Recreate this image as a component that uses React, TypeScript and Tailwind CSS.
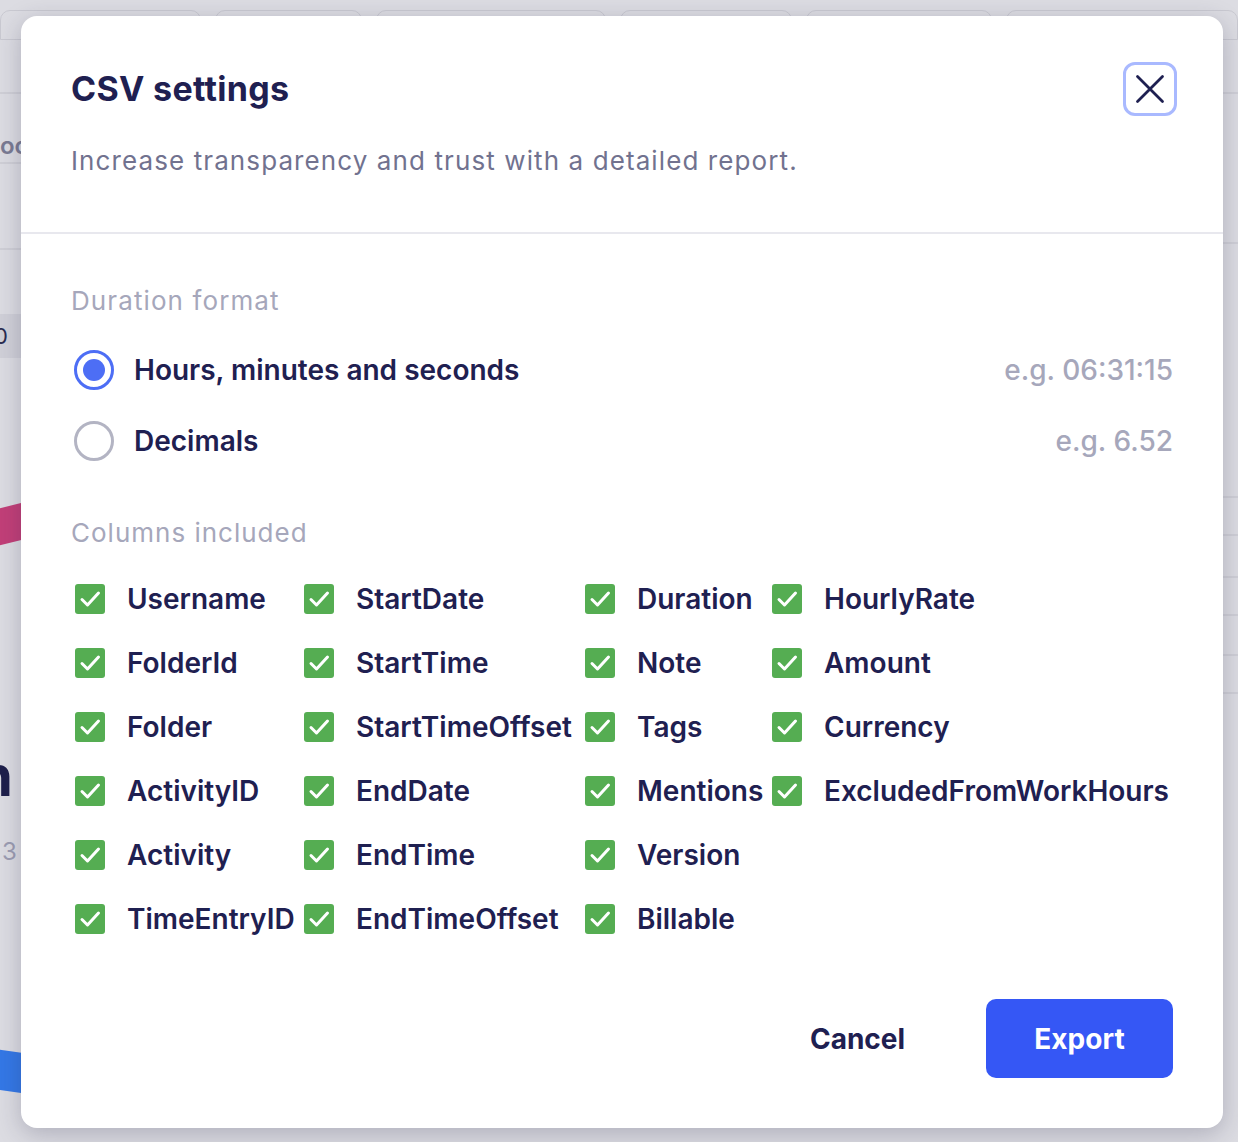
const columns = [
  "Username",
  "FolderId",
  "Folder",
  "ActivityID",
  "Activity",
  "TimeEntryID",
  "StartDate",
  "StartTime",
  "StartTimeOffset",
  "EndDate",
  "EndTime",
  "EndTimeOffset",
  "Duration",
  "Note",
  "Tags",
  "Mentions",
  "Version",
  "Billable",
  "HourlyRate",
  "Amount",
  "Currency",
  "ExcludedFromWorkHours",
];

const formats = [
  { label: "Hours, minutes and seconds", example: "e.g. 06:31:15", selected: true },
  { label: "Decimals", example: "e.g. 6.52", selected: false },
];

function Checkbox() {
  return (
    <span className="ml-[4px] flex h-[30px] w-[30px] shrink-0 items-center justify-center rounded-[3px] bg-[#55ad52]">
      <svg viewBox="0 0 30 30" className="h-[30px] w-[30px]" fill="none" stroke="white" strokeWidth="3" strokeLinecap="round" strokeLinejoin="round">
        <path d="M7 15.5l5.5 5.5L23.5 9" />
      </svg>
    </span>
  );
}

function Radio({ selected }: { selected: boolean }) {
  return (
    <span
      className={
        selected
          ? "flex h-[40px] w-[40px] shrink-0 items-center justify-center rounded-full border-[3px] border-[#4d6ef5]"
          : "flex h-[40px] w-[40px] shrink-0 items-center justify-center rounded-full border-[3px] border-[#b3b4c3]"
      }
    >
      {selected && <span className="h-[22px] w-[22px] rounded-full bg-[#4d6ef5]" />}
    </span>
  );
}

export default function App() {
  return (
    <div className="relative h-[1142px] w-[1238px] overflow-hidden bg-[#dcdce2] font-['Inter','Noto_Sans',sans-serif]">
      {/* Page behind the overlay */}
      <div className="absolute left-0 right-0 top-[10px] flex gap-[14px]">
        <div className="h-[30px] w-[208px] rounded-t-[10px] border border-[#c9c9d1]" />
        <div className="h-[30px] w-[152px] rounded-t-[10px] border border-[#c9c9d1]" />
        <div className="h-[30px] w-[238px] rounded-t-[10px] border border-[#c9c9d1]" />
        <div className="h-[30px] w-[178px] rounded-t-[10px] border border-[#c9c9d1]" />
        <div className="h-[30px] w-[192px] rounded-t-[10px] border border-[#c9c9d1]" />
        <div className="h-[30px] w-[240px] rounded-t-[10px] border border-[#c9c9d1]" />
      </div>
      <div className="absolute left-0 top-[92px] h-[2px] w-[30px] bg-[#cfcfd6]" />
      <div className="absolute left-0 top-[128px] text-[24px] font-semibold text-[#7a7b93]">oo</div>
      <div className="absolute left-0 top-[162px] h-[2px] w-[30px] bg-[#cfcfd6]" />
      <div className="absolute left-0 top-[248px] h-[2px] w-[30px] bg-[#cfcfd6]" />
      <div className="absolute left-0 top-[314px] flex h-[44px] w-[30px] items-center rounded-r-[6px] bg-[#d0d0d8] text-[22px] text-[#2a2b50]">
        <span className="-ml-[6px]">0</span>
      </div>
      <div className="absolute -left-[10px] top-[505px] h-[36px] w-[50px] -rotate-[14deg] bg-[#c23f78]" />
      <div className="absolute left-0 top-[748px] text-[56px] font-bold leading-none text-[#1e1f4b]">
        <span className="-ml-[22px]">h</span>
      </div>
      <div className="absolute left-[2px] top-[834px] text-[24px] text-[#9c9db2]">3</div>
      <div className="absolute -left-[10px] top-[1052px] h-[40px] w-[50px] rotate-[8deg] bg-[#3478e6]" />
      <div className="absolute right-0 top-[92px] h-[2px] w-[20px] bg-[#cfcfd6]" />
      <div className="absolute right-0 top-[242px] h-[2px] w-[20px] bg-[#cfcfd6]" />
      <div className="absolute right-0 top-[496px] h-[2px] w-[20px] bg-[#cfcfd6]" />
      <div className="absolute right-0 top-[534px] h-[2px] w-[20px] bg-[#cfcfd6]" />
      <div className="absolute right-0 top-[576px] h-[2px] w-[20px] bg-[#cfcfd6]" />
      <div className="absolute right-0 top-[614px] h-[2px] w-[20px] bg-[#cfcfd6]" />
      <div className="absolute right-0 top-[654px] h-[2px] w-[20px] bg-[#cfcfd6]" />
      <div className="absolute right-0 top-[692px] h-[2px] w-[20px] bg-[#cfcfd6]" />

      {/* Modal */}
      <div className="relative ml-[21px] mt-[16px] flex h-[1112px] w-[1202px] flex-col rounded-[16px] bg-white shadow-[0_6px_24px_rgba(40,40,70,0.25)]">
        <div className="border-b-2 border-[#e8e8ee] px-[50px] pb-[53px] pt-[46px]">
          <div className="flex h-[54px] items-center justify-between">
            <h1 className="text-[34px] font-bold leading-none tracking-[0.3px] text-[#1f2051]">CSV settings</h1>
            <button className="-mr-[4px] flex h-[54px] w-[54px] items-center justify-center rounded-[12px] border-[3px] border-[#a9b9ff]">
              <svg viewBox="0 0 30 30" className="h-[30px] w-[30px]" fill="none" stroke="#1f2051" strokeWidth="2.8" strokeLinecap="round">
                <path d="M2.5 2.5l25 25M27.5 2.5l-25 25" />
              </svg>
            </button>
          </div>
          <p className="mt-[27px] text-[26px] leading-[36px] tracking-[1.1px] text-[#71728f]">
            Increase transparency and trust with a detailed report.
          </p>
        </div>

        <div className="flex flex-1 flex-col px-[50px] pb-[50px] pt-[49px]">
          <div className="text-[26px] leading-[36px] tracking-[1.1px] text-[#a6a7bb]">Duration format</div>
          <div className="mt-[27px] flex flex-col gap-[23px] pl-[3px]">
            {formats.map((f) => (
              <div key={f.label} className="flex h-[48px] items-center">
                <Radio selected={f.selected} />
                <span className="ml-[20px] text-[28px] font-semibold text-[#1f2051]">{f.label}</span>
                <span className="ml-auto text-[28px] font-medium text-[#a6a7bb]">{f.example}</span>
              </div>
            ))}
          </div>

          <div className="mt-[50px] text-[26px] leading-[36px] tracking-[1px] text-[#a6a7bb]">Columns included</div>
          <div className="mt-[28px] grid grid-flow-col grid-cols-[229px_281px_187px_1fr] grid-rows-6 gap-y-[24px]">
            {columns.map((c) => (
              <div key={c} className="flex h-[40px] items-center gap-[22px] whitespace-nowrap">
                <Checkbox />
                <span className="text-[28px] font-semibold text-[#1f2051]">{c}</span>
              </div>
            ))}
          </div>

          <div className="mt-auto flex items-center justify-end gap-[35px]">
            <button className="h-[79px] w-[187px] text-[28px] font-bold text-[#1f2051]">Cancel</button>
            <button className="h-[79px] w-[187px] rounded-[10px] bg-[#3557f5] text-[28px] font-bold text-white">Export</button>
          </div>
        </div>
      </div>
    </div>
  );
}
